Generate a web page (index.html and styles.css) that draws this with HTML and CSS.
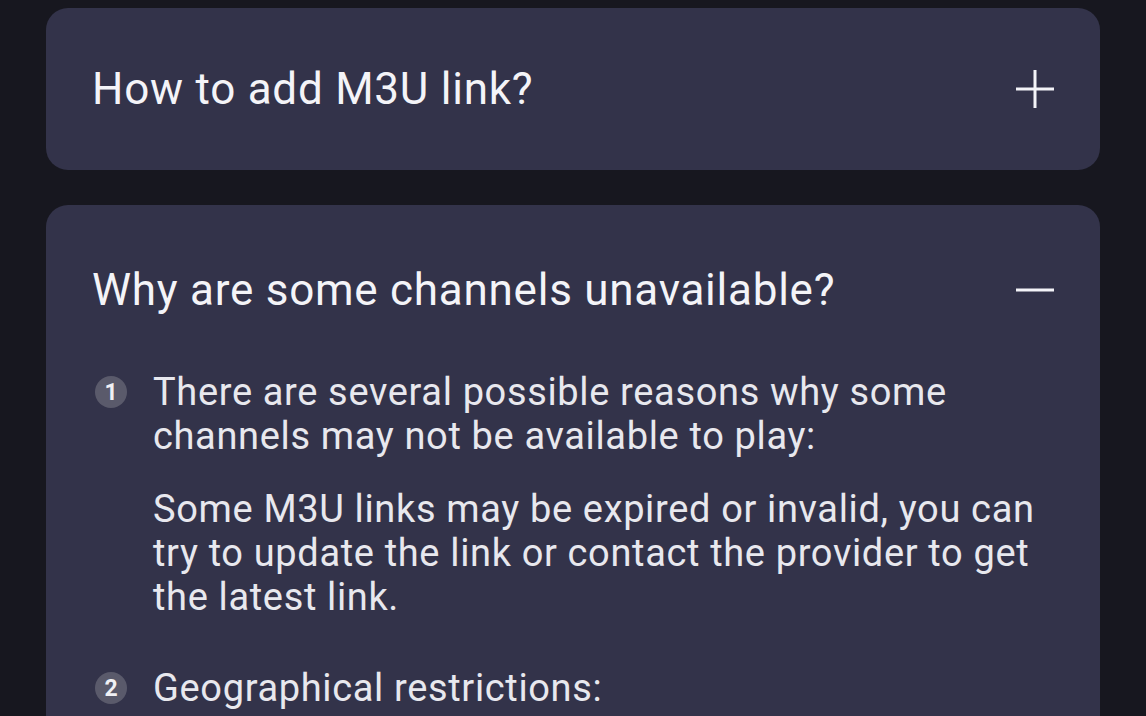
FILE: index.html
```html
<!DOCTYPE html>
<html lang="en">
<head>
    <meta charset="UTF-8">
    <meta name="viewport" content="width=device-width, initial-scale=1.0">
    <title>FAQ</title>
    <link rel="stylesheet" href="styles.css">
</head>
<body>
    <div class="faq-list">
        <div class="faq-card">
            <div class="faq-head">
                <span class="faq-title">How to add M3U link?</span>
                <svg class="faq-icon" viewBox="0 0 40 40"><path d="M20 1V39M1 20H39" /></svg>
            </div>
        </div>

        <div class="faq-card open">
            <div class="faq-head">
                <span class="faq-title">Why are some channels unavailable?</span>
                <svg class="faq-icon" viewBox="0 0 40 40"><path d="M1 20H39" /></svg>
            </div>
            <ol class="faq-body">
                <li class="faq-item">
                    <span class="num">1</span>
                    <div class="item-text">
                        <p>There are several possible reasons why some channels may not be available to play:</p>
                        <p>Some M3U links may be expired or invalid, you can try to update the link or contact the provider to get the latest link.</p>
                    </div>
                </li>
                <li class="faq-item">
                    <span class="num">2</span>
                    <div class="item-text">
                        <p>Geographical restrictions:</p>
                    </div>
                </li>
            </ol>
        </div>
    </div>
</body>
</html>
```

FILE: styles.css
```css
* {
    margin: 0;
    padding: 0;
    box-sizing: border-box;
}

body {
    background-color: #17171f;
    font-family: Roboto, "Noto Sans", Arial, sans-serif;
    color: #f4f4f8;
    overflow: hidden;
    height: 716px;
}

.faq-list {
    display: flex;
    flex-direction: column;
    gap: 35px;
    padding: 8px 46px 0 46px;
}

.faq-card {
    background-color: #33334a;
    border-radius: 22px;
}

.faq-card.open {
    padding-bottom: 120px;
}

.faq-head {
    display: flex;
    justify-content: space-between;
    align-items: center;
    height: 162px;
    padding: 0 45px 0 46px;
}

.open .faq-head {
    height: 170px;
}

.faq-title {
    font-size: 44px;
    letter-spacing: 0.75px;
    line-height: 52px;
}

.faq-icon {
    width: 40px;
    height: 40px;
    fill: none;
    stroke: #f4f4f8;
    stroke-width: 3;
}

.faq-body {
    list-style: none;
    padding: 0 40px 0 49px;
    margin-top: -5px;
}

.faq-item {
    display: flex;
    gap: 26px;
    margin-bottom: 47px;
}

.num {
    flex: none;
    width: 32px;
    height: 32px;
    margin-top: 6px;
    border-radius: 50%;
    background-color: #5a5a6b;
    color: #f0f0f4;
    font-size: 23px;
    font-weight: 700;
    display: flex;
    justify-content: center;
    align-items: center;
}

.item-text {
    font-size: 38px;
    line-height: 44px;
    letter-spacing: 0.65px;
    color: #e8e8ee;
}

.item-text p + p {
    margin-top: 29px;
}
```
